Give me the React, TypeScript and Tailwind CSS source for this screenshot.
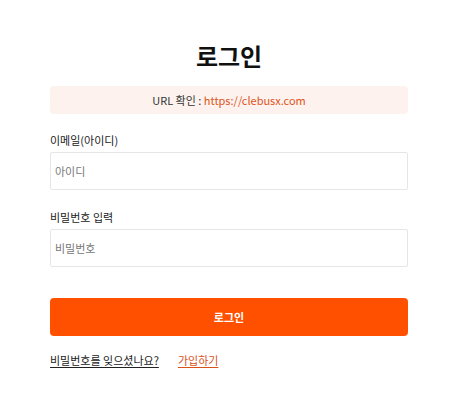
export default function App() {
  return (
    <div className="min-h-[417px] bg-white font-['Noto_Sans_CJK_KR','Noto_Sans',sans-serif]">
      <div className="ml-[50px] w-[358px] pt-[38px]">
        <h1 className="text-center text-[24px] font-bold leading-[36px] text-[#111]">로그인</h1>
        <div className="mt-[12px] flex h-[28px] items-center justify-center rounded-[4px] bg-[#fdf2ee] text-[11px] text-[#333]">
          URL 확인 :&nbsp;<span className="text-[#e0541c]">https://clebusx.com</span>
        </div>

        <label className="mt-[17px] block text-[11px] leading-[18px] text-[#222]">이메일(아이디)</label>
        <input
          className="mt-[3px] block h-[38px] w-full rounded-[2px] border border-[#e6e6e6] px-[4px] text-[11px] text-[#333] outline-none placeholder:text-[#777]"
          placeholder="아이디"
          type="text"
        />

        <label className="mt-[18px] block text-[11px] leading-[18px] text-[#222]">비밀번호 입력</label>
        <input
          className="mt-[3px] block h-[38px] w-full rounded-[2px] border border-[#e6e6e6] px-[4px] text-[11px] text-[#333] outline-none placeholder:text-[#777]"
          placeholder="비밀번호"
          type="password"
        />

        <button
          className="mt-[31px] block h-[38px] w-full rounded-[4px] bg-[#ff5000] text-[11px] font-bold text-white"
          type="button"
        >
          로그인
        </button>

        <div className="mt-[15px] flex items-center gap-[19px] text-[11px] leading-[18px]">
          <a className="text-[#222] underline underline-offset-2" href="#">
            비밀번호를 잊으셨나요?
          </a>
          <a className="text-[#d9521c] underline underline-offset-2" href="#">
            가입하기
          </a>
        </div>
      </div>
    </div>
  );
}
